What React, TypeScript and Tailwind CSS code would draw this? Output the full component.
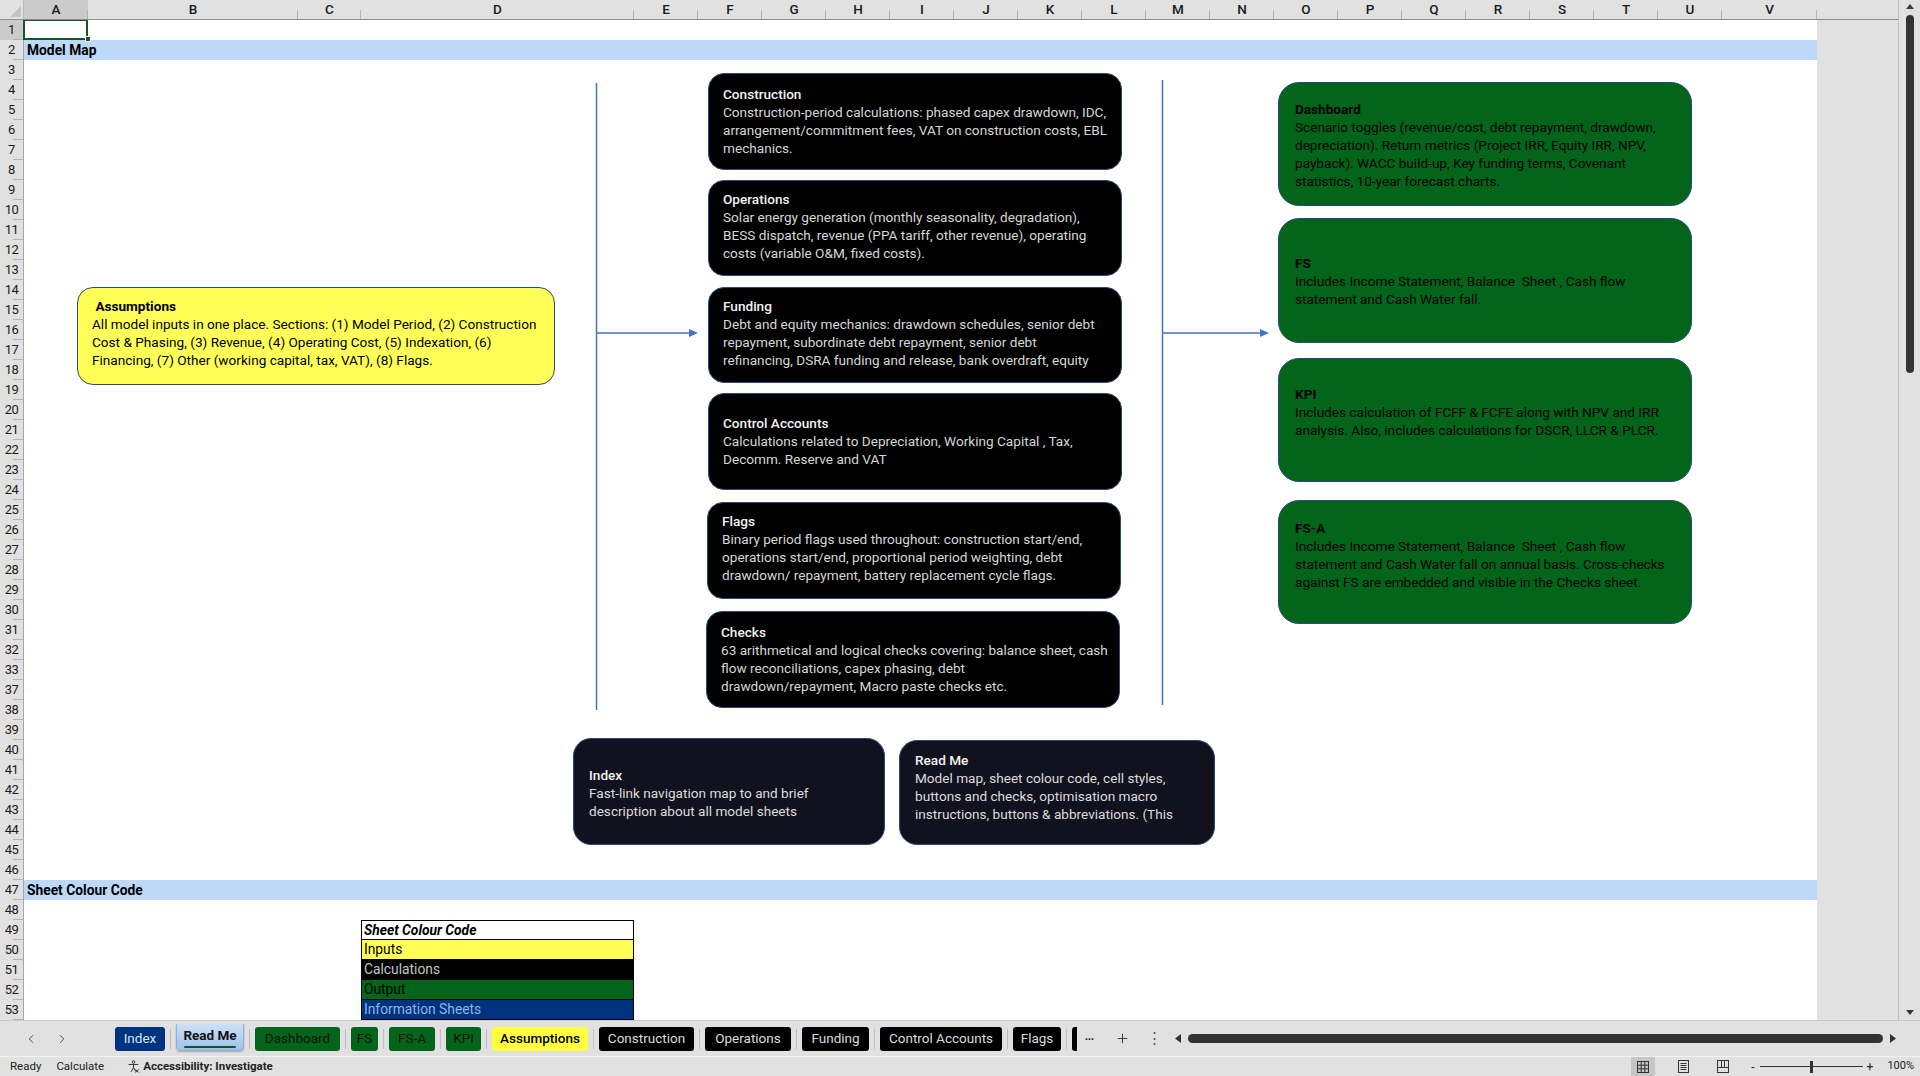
import React from 'react';
import { ChevronLeft, ChevronRight, Plus } from 'lucide-react';

type Kind = 'input' | 'calc' | 'out' | 'info';

type Shape = {
  kind: Kind;
  x: number;
  y: number;
  w: number;
  h: number;
  pt: number;
  pl: number;
  title: string;
  lines: string[];
};

const COLS: [string, number][] = [
  ['A', 64],
  ['B', 210],
  ['C', 63],
  ['D', 273],
  ...'EFGHIJKLMNOPQRSTU'.split('').map((c) => [c, 64] as [string, number]),
  ['V', 95],
];

// rows 34-36 are hidden in the workbook
const ROWS: number[] = [
  ...Array.from({ length: 33 }, (_, i) => i + 1),
  ...Array.from({ length: 17 }, (_, i) => i + 37),
];

const SHAPES: Shape[] = [
  {
    kind: 'input',
    x: 53,
    y: 267,
    w: 478,
    h: 98,
    pt: 9,
    pl: 14,
    title: ' Assumptions',
    lines: [
      'All model inputs in one place. Sections: (1) Model Period, (2) Construction',
      'Cost & Phasing, (3) Revenue, (4) Operating Cost, (5) Indexation, (6)',
      'Financing, (7) Other (working capital, tax, VAT), (8) Flags.',
    ],
  },
  {
    kind: 'calc',
    x: 684,
    y: 53,
    w: 414,
    h: 97,
    pt: 11,
    pl: 14,
    title: 'Construction',
    lines: [
      'Construction-period calculations: phased capex drawdown, IDC,',
      'arrangement/commitment fees, VAT on construction costs, EBL',
      'mechanics.',
    ],
  },
  {
    kind: 'calc',
    x: 684,
    y: 160,
    w: 414,
    h: 96,
    pt: 9,
    pl: 14,
    title: 'Operations',
    lines: [
      'Solar energy generation (monthly seasonality, degradation),',
      'BESS dispatch, revenue (PPA tariff, other revenue), operating',
      'costs (variable O&M, fixed costs).',
    ],
  },
  {
    kind: 'calc',
    x: 684,
    y: 267,
    w: 414,
    h: 96,
    pt: 9,
    pl: 14,
    title: 'Funding',
    lines: [
      'Debt and equity mechanics: drawdown schedules, senior debt',
      'repayment, subordinate debt repayment, senior debt',
      'refinancing, DSRA funding and release, bank overdraft, equity',
    ],
  },
  {
    kind: 'calc',
    x: 684,
    y: 373,
    w: 414,
    h: 97,
    pt: 20,
    pl: 14,
    title: 'Control Accounts',
    lines: ['Calculations related to Depreciation, Working Capital , Tax,', 'Decomm. Reserve and VAT'],
  },
  {
    kind: 'calc',
    x: 683,
    y: 482,
    w: 414,
    h: 97,
    pt: 9,
    pl: 14,
    title: 'Flags',
    lines: [
      'Binary period flags used throughout: construction start/end,',
      'operations start/end, proportional period weighting, debt',
      'drawdown/ repayment, battery replacement cycle flags.',
    ],
  },
  {
    kind: 'calc',
    x: 682,
    y: 591,
    w: 414,
    h: 97,
    pt: 11,
    pl: 14,
    title: 'Checks',
    lines: [
      '63 arithmetical and logical checks covering: balance sheet, cash',
      'flow reconciliations, capex phasing, debt',
      'drawdown/repayment, Macro paste checks etc.',
    ],
  },
  {
    kind: 'out',
    x: 1254,
    y: 62,
    w: 414,
    h: 124,
    pt: 17,
    pl: 16,
    title: 'Dashboard',
    lines: [
      'Scenario toggles (revenue/cost, debt repayment, drawdown,',
      'depreciation). Return metrics (Project IRR, Equity IRR, NPV,',
      'payback). WACC build-up, Key funding terms, Covenant',
      'statistics, 10-year forecast charts.',
    ],
  },
  {
    kind: 'out',
    x: 1254,
    y: 198,
    w: 414,
    h: 125,
    pt: 35,
    pl: 16,
    title: 'FS',
    lines: ['Includes Income Statement, Balance  Sheet , Cash flow', 'statement and Cash Water fall.'],
  },
  {
    kind: 'out',
    x: 1254,
    y: 338,
    w: 414,
    h: 124,
    pt: 26,
    pl: 16,
    title: 'KPI',
    lines: [
      'Includes calculation of FCFF & FCFE along with NPV and IRR',
      'analysis. Also, includes calculations for DSCR, LLCR & PLCR.',
    ],
  },
  {
    kind: 'out',
    x: 1254,
    y: 480,
    w: 414,
    h: 124,
    pt: 18,
    pl: 16,
    title: 'FS-A',
    lines: [
      'Includes Income Statement, Balance  Sheet , Cash flow',
      'statement and Cash Water fall on annual basis. Cross-checks',
      'against FS are embedded and visible in the Checks sheet.',
    ],
  },
  {
    kind: 'info',
    x: 549,
    y: 718,
    w: 312,
    h: 107,
    pt: 27,
    pl: 15,
    title: 'Index',
    lines: ['Fast-link navigation map to and brief', 'description about all model sheets'],
  },
  {
    kind: 'info',
    x: 875,
    y: 720,
    w: 316,
    h: 105,
    pt: 10,
    pl: 15,
    title: 'Read Me',
    lines: [
      'Model map, sheet colour code, cell styles,',
      'buttons and checks, optimisation macro',
      'instructions, buttons & abbreviations. (This',
    ],
  },
];

const SHAPE_STYLE: Record<Kind, { box: string; title: string; body: string }> = {
  input: {
    box: 'bg-[#ffff57] border-[#2c4a7c] rounded-[16px]',
    title: 'font-bold text-black',
    body: 'text-black',
  },
  calc: {
    box: 'bg-black border-[#2c4a7c] rounded-[16px]',
    title: 'font-medium text-[#f2f2f2]',
    body: 'text-[#d6d6d6]',
  },
  out: {
    box: 'bg-[#03651a] border-[#2c4a7c] rounded-[21px]',
    title: 'font-bold text-black',
    body: 'text-black',
  },
  info: {
    box: 'bg-[#12121f] border-[#2c4a7c] rounded-[18px]',
    title: 'font-medium text-[#f2f2f2]',
    body: 'text-[#dcdcdc]',
  },
};

type Tab = { name: string; w: number; cls: string; active?: boolean };

const TABS: Tab[] = [
  { name: 'Index', w: 50, cls: 'bg-[#00337f] text-[#d5e3f7]' },
  { name: 'Read Me', w: 68, cls: '', active: true },
  { name: 'Dashboard', w: 85, cls: 'bg-[#03651a] text-[#111]' },
  { name: 'FS', w: 27, cls: 'bg-[#03651a] text-[#111]' },
  { name: 'FS-A', w: 46, cls: 'bg-[#03651a] text-[#111]' },
  { name: 'KPI', w: 35, cls: 'bg-[#03651a] text-[#111]' },
  { name: 'Assumptions', w: 96, cls: 'bg-[#ffff40] text-black font-medium' },
  { name: 'Construction', w: 95, cls: 'bg-black text-[#dadada]' },
  { name: 'Operations', w: 86, cls: 'bg-black text-[#dadada]' },
  { name: 'Funding', w: 67, cls: 'bg-black text-[#dadada]' },
  { name: 'Control Accounts', w: 122, cls: 'bg-black text-[#dadada]' },
  { name: 'Flags', w: 48, cls: 'bg-black text-[#dadada]' },
];

function ShapeBox({ s }: { s: Shape }) {
  const st = SHAPE_STYLE[s.kind];
  return (
    <div
      className={`absolute overflow-hidden border ${st.box} font-['Roboto','Liberation_Sans',sans-serif] text-[13.6px] leading-[18px]`}
      style={{ left: s.x, top: s.y, width: s.w, height: s.h, paddingTop: s.pt, paddingLeft: s.pl }}
    >
      <div className={`whitespace-pre ${st.title}`}>{s.title}</div>
      {s.lines.map((l, i) => (
        <div key={i} className={`whitespace-pre ${st.body}`}>
          {l}
        </div>
      ))}
    </div>
  );
}

function Connectors() {
  return (
    <svg className="absolute inset-0 h-full w-full" fill="none">
      <line x1="572.5" y1="63" x2="572.5" y2="690" stroke="#4472c4" strokeWidth="1.5" />
      <line x1="572.5" y1="313" x2="667" y2="313" stroke="#4472c4" strokeWidth="1.5" />
      <polygon points="674,313 665,309 665,317" fill="#4472c4" />
      <line x1="1138.5" y1="60" x2="1138.5" y2="685" stroke="#4472c4" strokeWidth="1.5" />
      <line x1="1138.5" y1="313" x2="1238" y2="313" stroke="#4472c4" strokeWidth="1.5" />
      <polygon points="1245,313 1236,309 1236,317" fill="#4472c4" />
    </svg>
  );
}

function ColumnHeader() {
  return (
    <div className="flex h-[20px] shrink-0 border-b border-[#8d8d8d] bg-[#e1e1e1] font-['Roboto','Liberation_Sans',sans-serif] text-[13.5px] text-[#1a1a1a]">
      <div className="relative w-[24px] shrink-0 border-r border-[#b9b9b9]">
        <svg className="absolute bottom-[2px] right-[2px]" width="11" height="11">
          <polygon points="11,0 11,11 0,11" fill="#c2c2c2" />
        </svg>
      </div>
      {COLS.map(([c, w]) => (
        <div
          key={c}
          style={{ width: w }}
          className={`relative flex shrink-0 items-center justify-center font-medium after:absolute after:bottom-0 after:right-0 after:h-[9px] after:w-px after:bg-[#b3b3b3] ${
            c === 'A' ? 'bg-[#cbcbcb]' : ''
          }`}
        >
          {c}
        </div>
      ))}
      <div className="flex-1" />
    </div>
  );
}

function RowHeader() {
  return (
    <div className="w-[24px] shrink-0 border-r border-[#a6a6a6] bg-[#e1e1e1] font-['Roboto','Liberation_Sans',sans-serif] text-[13px] text-[#1a1a1a]">
      {ROWS.map((r) => (
        <div
          key={r}
          className={`relative flex h-[20px] items-center justify-center tracking-[-0.5px] after:absolute after:bottom-0 after:right-0 after:h-px after:w-[10px] after:bg-[#b3b3b3] ${
            r === 1 ? 'bg-[#cbcbcb]' : ''
          }`}
        >
          {r}
        </div>
      ))}
    </div>
  );
}

function ColourRow({ label, cls }: { label: string; cls: string }) {
  return (
    <div
      className={`ml-[337px] flex h-[20px] w-[273px] items-center border-x border-b border-black px-[2px] font-['Roboto','Liberation_Sans',sans-serif] text-[13.8px] ${cls}`}
    >
      {label}
    </div>
  );
}

function SheetRow({ r }: { r: number }) {
  if (r === 1) {
    return (
      <div className="relative h-[20px]">
        <div className="absolute left-[-1px] top-[-1px] h-[21px] w-[65px] border-2 border-[#17532c]" />
        <div className="absolute left-[61px] top-[16px] h-[6px] w-[6px] border border-white bg-[#17532c]" />
      </div>
    );
  }
  if (r === 2 || r === 47) {
    return (
      <div className="flex h-[20px] items-center bg-[#bcdaf8] pl-[3px] font-['Roboto','Liberation_Sans',sans-serif] text-[13.8px] font-bold text-black">
        {r === 2 ? 'Model Map' : 'Sheet Colour Code'}
      </div>
    );
  }
  if (r === 49) return <ColourRow label="Sheet Colour Code" cls="border-t bg-white font-bold italic text-black" />;
  if (r === 50) return <ColourRow label="Inputs" cls="bg-[#ffff57] text-black" />;
  if (r === 51) return <ColourRow label="Calculations" cls="bg-black text-[#c4c4c4]" />;
  if (r === 52) return <ColourRow label="Output" cls="bg-[#03651a] text-black" />;
  if (r === 53) return <ColourRow label="Information Sheets" cls="bg-[#00337f] text-[#8fb4e3]" />;
  return <div className="h-[20px]" />;
}

function SheetBody() {
  return (
    <div className="flex h-[1000px] overflow-hidden">
      <RowHeader />
      <div className="relative w-[1793px] shrink-0 bg-white">
        {ROWS.map((r) => (
          <SheetRow key={r} r={r} />
        ))}
        <div className="pointer-events-none absolute inset-0">
          <Connectors />
          {SHAPES.map((s) => (
            <ShapeBox key={s.title} s={s} />
          ))}
        </div>
      </div>
      <div className="flex-1 bg-[#e1e1e1]" />
    </div>
  );
}

function VerticalScroll() {
  return (
    <div className="flex h-[1020px] w-[22px] shrink-0 flex-col items-center border-l border-[#bcbcbc] bg-[#e1e1e1] pt-[4px] pb-[5px]">
      <svg width="8" height="5">
        <polygon points="4,0 8,5 0,5" fill="#3a3a3a" />
      </svg>
      <div className="mt-[6px] h-[358px] w-[8px] rounded-full bg-[#333]" />
      <div className="flex-1" />
      <svg width="8" height="5">
        <polygon points="0,0 8,0 4,5" fill="#3a3a3a" />
      </svg>
    </div>
  );
}

function SheetTab({ t }: { t: Tab }) {
  if (t.active) {
    return (
      <div
        style={{ width: t.w }}
        className="flex h-[29px] shrink-0 -translate-y-[2px] flex-col items-center justify-center rounded-[4px] border border-[#8eaed6] bg-gradient-to-b from-[#cfe2f8] to-[#9fc2ec] shadow-[0_1px_2px_rgba(0,0,0,0.25)]"
      >
        <span className="font-bold text-[#111]">{t.name}</span>
        <span className="mt-[1px] h-[2px] w-[52px] rounded bg-[#17532c]" />
      </div>
    );
  }
  return (
    <div
      style={{ width: t.w }}
      className={`flex h-[24px] shrink-0 items-center justify-center rounded-[3px] whitespace-nowrap ${t.cls}`}
    >
      {t.name}
    </div>
  );
}

function TabBar() {
  return (
    <div className="flex h-[36px] items-center border-t border-[#c9c9c9] bg-[#e1e1e1] font-['Roboto','Liberation_Sans',sans-serif] text-[13.5px]">
      <div className="ml-[24px] flex gap-[17px] text-[#444]">
        <ChevronLeft size={14} strokeWidth={1.6} />
        <ChevronRight size={14} strokeWidth={1.6} />
      </div>
      <div className="ml-[46px] flex w-[962px] items-center gap-[5px] overflow-hidden">
        {TABS.map((t, i) => (
          <React.Fragment key={t.name}>
            {i > 0 && <span className="h-[20px] w-px shrink-0 bg-[#bdbdbd]" />}
            <SheetTab t={t} />
          </React.Fragment>
        ))}
        <span className="h-[20px] w-px shrink-0 bg-[#bdbdbd]" />
        {/* next sheet tab, scrolled out of view */}
        <div className="h-[24px] w-[70px] shrink-0 rounded-[3px] bg-black" />
      </div>
      <span className="ml-[5px] w-[14px] text-center text-[13px] font-bold leading-none tracking-[-1px] text-[#333]">···</span>
      <Plus size={15} strokeWidth={1.5} className="ml-[19px] text-[#333]" />
      <span className="ml-[17px] w-[14px] text-center text-[15px] leading-none text-[#555]">⋮</span>
      <svg className="ml-[14px]" width="6" height="9">
        <polygon points="6,0 6,9 0,4.5" fill="#333" />
      </svg>
      <div className="ml-[7px] h-[9px] w-[695px] rounded-full bg-[#333]" />
      <svg className="ml-[7px]" width="6" height="9">
        <polygon points="0,0 6,4.5 0,9" fill="#333" />
      </svg>
    </div>
  );
}

function StatusBar() {
  return (
    <div className="flex h-[20px] items-center border-t border-[#f2f2f2] bg-[#e1e1e1] font-['Roboto','Liberation_Sans',sans-serif] text-[11.5px] text-[#222]">
      <span className="ml-[10px]">Ready</span>
      <span className="ml-[15px]">Calculate</span>
      <svg className="ml-[23px]" width="13" height="13" viewBox="0 0 16 16" fill="none" stroke="#333" strokeWidth="1.2">
        <circle cx="8" cy="2.5" r="1.6" />
        <path d="M2 5.5h12M8 5.5v4M8 9.5l-3 5M8 9.5l3 5" />
        <path d="M10.5 11.5l4 4M14.5 11.5l-4 4" />
      </svg>
      <span className="ml-[3px] font-bold">Accessibility: Investigate</span>
      <div className="flex-1" />
      <div className="flex h-[20px] w-[24px] items-center justify-center bg-[#c6c6c6]">
        <svg width="12" height="12" viewBox="0 0 12 12" fill="none" stroke="#333" strokeWidth="1">
          <rect x="0.5" y="0.5" width="11" height="11" />
          <path d="M4.2 0.5v11M7.8 0.5v11M0.5 4.2h11M0.5 7.8h11" />
        </svg>
      </div>
      <svg className="ml-[23px]" width="11" height="13" viewBox="0 0 11 13" fill="none" stroke="#333" strokeWidth="1">
        <rect x="0.5" y="0.5" width="10" height="12" />
        <path d="M2.5 3.5h6M2.5 5.5h6M2.5 7.5h6M2.5 9.5h6" />
      </svg>
      <svg className="ml-[28px]" width="12" height="13" viewBox="0 0 12 13" fill="none" stroke="#333" strokeWidth="1">
        <rect x="0.5" y="0.5" width="11" height="12" />
        <path d="M4.5 0.5v7h3v-7M0.5 7.5h11" />
      </svg>
      <span className="ml-[22px] text-[12px]">-</span>
      <div className="relative ml-[5px] flex h-[12px] w-[103px] items-center">
        <div className="h-px w-full bg-[#333]" />
        <div className="absolute left-[50px] top-0 h-[12px] w-[3px] bg-[#333]" />
      </div>
      <span className="ml-[4px] text-[12px]">+</span>
      <span className="ml-[14px] mr-[6px] text-[11px]">100%</span>
    </div>
  );
}

export default function App() {
  return (
    <div className="flex h-[1076px] w-[1920px] flex-col overflow-hidden bg-white">
      <div className="flex h-[1020px]">
        <div className="flex min-w-0 flex-1 flex-col">
          <ColumnHeader />
          <SheetBody />
        </div>
        <VerticalScroll />
      </div>
      <TabBar />
      <StatusBar />
    </div>
  );
}
